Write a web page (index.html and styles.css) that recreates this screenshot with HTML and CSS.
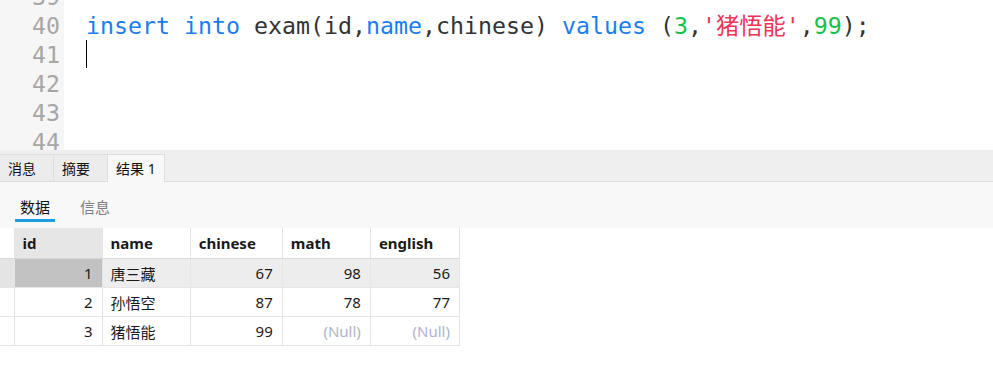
FILE: index.html
```html
<!DOCTYPE html>
<html lang="zh">
  <head>
    <meta charset="UTF-8" />
    <meta name="viewport" content="width=device-width, initial-scale=1.0" />
    <title>exam - 查询</title>
    <link rel="stylesheet" href="styles.css">
  </head>
  <body>
    <!-- 편집기 -->
    <div class="editor">
      <div class="gutter">
        <div class="scroll">
          <div class="ln">39</div>
          <div class="ln">40</div>
          <div class="ln">41</div>
          <div class="ln">42</div>
          <div class="ln">43</div>
          <div class="ln">44</div>
        </div>
      </div>
      <div class="code">
        <div class="scroll">
          <div class="line"></div>
          <div class="line"><span class="kw">insert</span> <span class="kw">into</span> exam(id,<span class="kw">name</span>,chinese) <span class="kw">values</span> (<span class="num">3</span>,<span class="str">'猪悟能'</span>,<span class="num">99</span>);</div>
          <div class="line"><span class="caret"></span></div>
          <div class="line"></div>
          <div class="line"></div>
          <div class="line"></div>
        </div>
      </div>
    </div>

    <!-- 결과 패널 -->
    <div class="result-tabs">
      <div class="tab">消息</div>
      <div class="tab">摘要</div>
      <div class="tab active">结果 1</div>
    </div>

    <div class="sub-tabs">
      <div class="sub-tab active">数据</div>
      <div class="sub-tab">信息</div>
    </div>

    <table class="grid">
      <colgroup>
        <col class="c-head" />
        <col class="c-id" />
        <col class="c-name" />
        <col class="c-chinese" />
        <col class="c-math" />
        <col class="c-english" />
      </colgroup>
      <thead>
        <tr>
          <th class="corner"></th>
          <th class="sorted">id</th>
          <th>name</th>
          <th>chinese</th>
          <th>math</th>
          <th>english</th>
        </tr>
      </thead>
      <tbody>
        <tr class="selected">
          <td class="rowhead"></td>
          <td class="n current">1</td>
          <td>唐三藏</td>
          <td class="n">67</td>
          <td class="n">98</td>
          <td class="n">56</td>
        </tr>
        <tr>
          <td class="rowhead"></td>
          <td class="n">2</td>
          <td>孙悟空</td>
          <td class="n">87</td>
          <td class="n">78</td>
          <td class="n">77</td>
        </tr>
        <tr>
          <td class="rowhead"></td>
          <td class="n">3</td>
          <td>猪悟能</td>
          <td class="n">99</td>
          <td class="n null">(Null)</td>
          <td class="n null">(Null)</td>
        </tr>
      </tbody>
    </table>
  </body>
</html>
```

FILE: styles.css
```css
body {
  margin: 0;
  background: #ffffff;
  font-family: "Noto Sans", "Noto Sans CJK SC", sans-serif;
  color: #1a1a1a;
}

/* editor */
.editor {
  display: flex;
  height: 150px;
  overflow: hidden;
  font-family: "DejaVu Sans Mono", "Noto Sans CJK SC", monospace;
  font-size: 23.25px;
  line-height: 29px;
}

.scroll {
  margin-top: -18px;
}

.gutter {
  width: 64px;
  box-sizing: border-box;
  padding-right: 4px;
  background: #f6f6f6;
  color: #a6a6a6;
  text-align: right;
}

.code {
  flex: 1;
  padding-left: 22px;
  color: #333333;
}

.line {
  height: 29px;
  white-space: pre;
}

.kw {
  color: #1a7df2;
}

.num {
  color: #14c14c;
}

.str {
  color: #f23358;
}

.caret {
  display: inline-block;
  width: 1px;
  height: 28px;
  background: #000000;
  vertical-align: top;
}

/* result tabs */
.result-tabs {
  display: flex;
  align-items: flex-end;
  height: 31px;
  background: #efefef;
  border-bottom: 1px solid #dcdcdc;
  font-size: 14px;
}

.tab {
  box-sizing: border-box;
  height: 27px;
  min-width: 54px;
  padding: 0 8px;
  line-height: 27px;
  border: 1px solid #dedede;
  border-bottom: none;
  border-left: none;
  background: #ececec;
  color: #111111;
}

.tab.active {
  background: #f8f8f8;
  margin-bottom: -1px;
  height: 28px;
}

.sub-tabs {
  display: flex;
  gap: 20px;
  height: 46px;
  padding-left: 15px;
  background: #f8f8f8;
  font-size: 15px;
}

.sub-tab {
  width: 40px;
  box-sizing: border-box;
  padding-top: 14px;
  text-align: center;
  color: #7f7f7f;
}

.sub-tab.active {
  color: #111111;
  border-bottom: 3px solid #1a9fe3;
  height: 40px;
}

/* grid */
.grid {
  border-collapse: collapse;
  table-layout: fixed;
  width: 460px;
  font-size: 15px;
}

.c-head { width: 14px; }
.c-id { width: 88px; }
.c-name { width: 88px; }
.c-chinese { width: 92px; }
.c-math { width: 88px; }
.c-english { width: 89px; }

.grid th,
.grid td {
  border: 1px solid #e3e3e3;
  padding: 0 9px 0 8px;
  white-space: nowrap;
  overflow: hidden;
}

.grid th {
  height: 30px;
  text-align: left;
  font-weight: 700;
  background: #ffffff;
  border-top: none;
  border-bottom-color: #dadada;
}

.grid th.corner {
  border-left: none;
  padding: 0;
}

.grid th.sorted {
  background: #e6e6e6;
}

.grid td {
  height: 28px;
}

.grid td.rowhead {
  padding: 0;
  border-left: none;
}

.grid td.n {
  text-align: right;
}

.grid td.null {
  color: #aab6c8;
}

.grid tr.selected td {
  background: #ededed;
  border-color: #e6e6e6;
}

.grid tr.selected td.rowhead {
  background: #e4e4e4;
}

.grid tr.selected td.current {
  background: #c2c2c2;
}
```
